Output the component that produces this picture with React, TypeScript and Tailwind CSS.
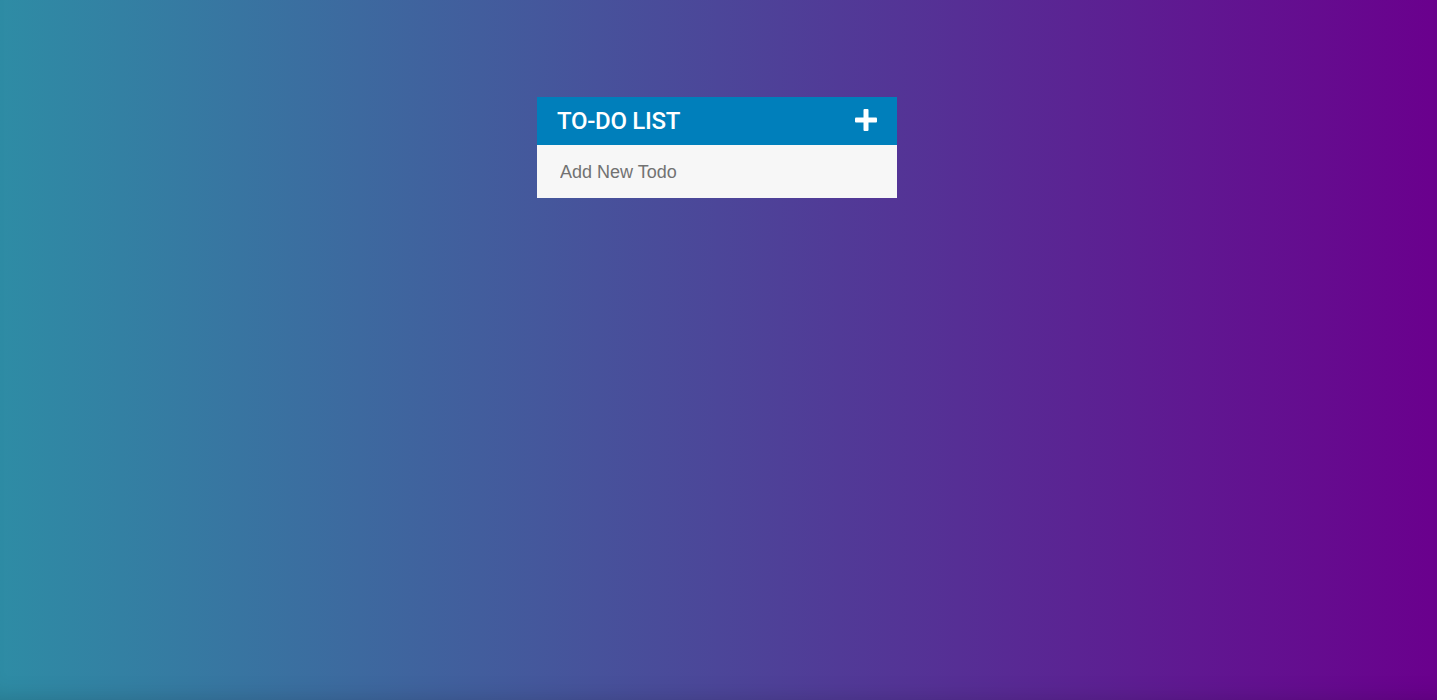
import { useState } from "react";

function PlusIcon() {
  return (
    <svg width="22" height="22" viewBox="0 0 22 22" fill="white">
      <rect x="8.5" y="0" width="5" height="22" rx="1" />
      <rect x="0" y="8.5" width="22" height="5" rx="1" />
    </svg>
  );
}

export default function App() {
  const [todo, setTodo] = useState("");

  return (
    <div className="min-h-[700px] w-full bg-[linear-gradient(to_right,#2e8ca5,#6a008d)] pt-[97px] pr-[3px] shadow-[inset_0_-20px_24px_-20px_rgba(0,0,0,0.18)]">
      <div className="mx-auto w-[360px]">
        {/* Header */}
        <div className="flex h-12 items-center justify-between bg-[#007fbb] pl-5 pr-[20px]">
          <h1 className="text-[24px] leading-none font-medium tracking-[-0.3px] text-white font-['Roboto',sans-serif]">TO-DO LIST</h1>
          <button className="flex items-center pb-[3px]" aria-label="Add todo">
            <PlusIcon />
          </button>
        </div>

        {/* New todo input */}
        <input
          value={todo}
          onChange={(e) => setTodo(e.target.value)}
          placeholder="Add New Todo"
          className="block h-[53px] w-full bg-[#f7f7f7] px-[23px] pt-px text-[18px] text-[#666] placeholder:text-[#727272] outline-none font-['Liberation_Sans',Arial,sans-serif]"
        />
      </div>
    </div>
  );
}
